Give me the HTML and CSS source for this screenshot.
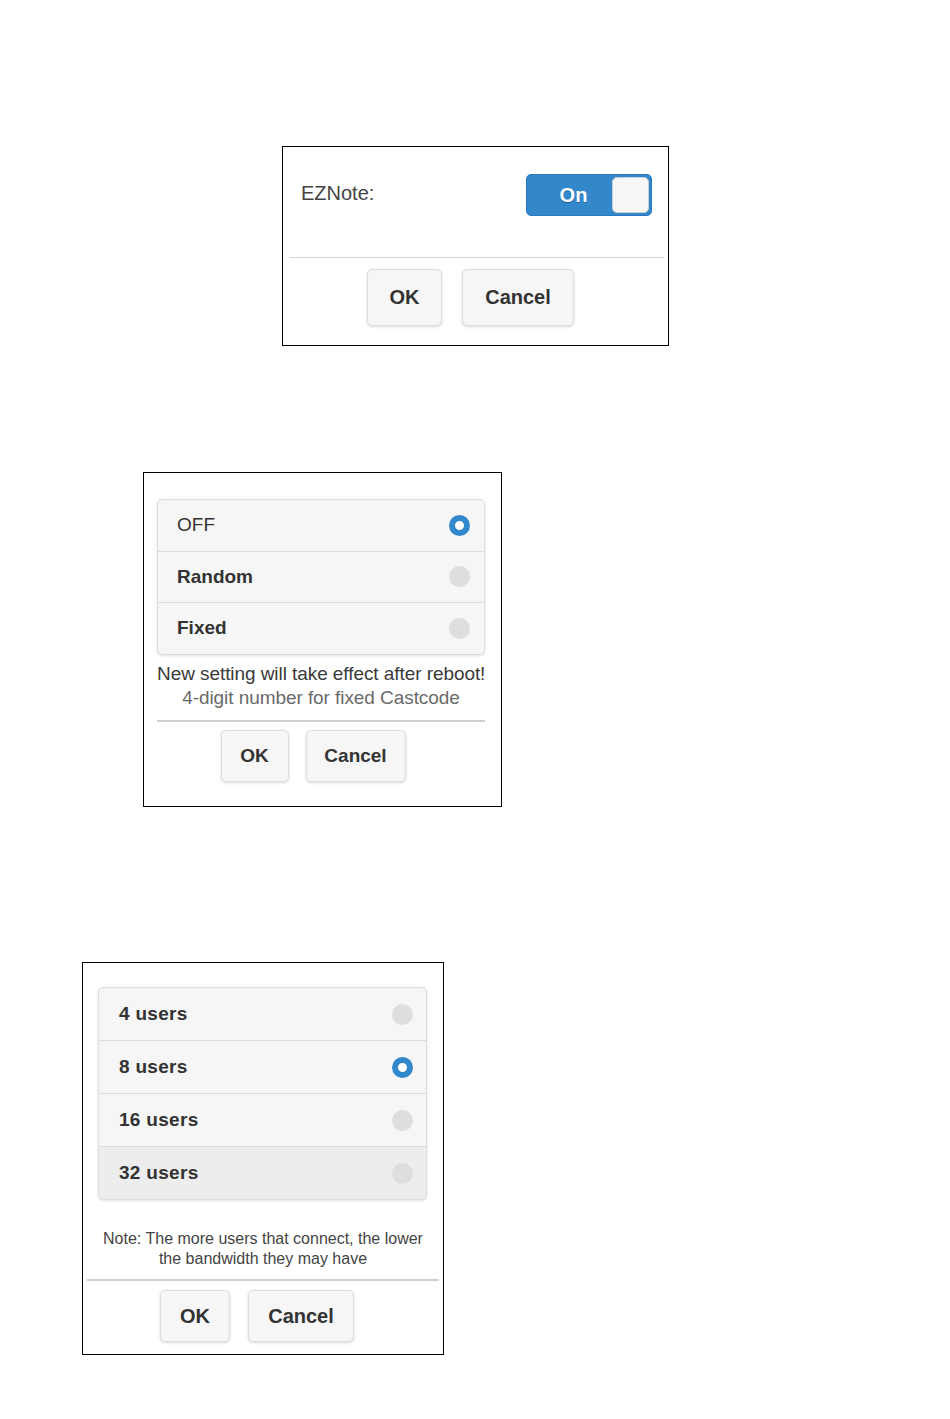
FILE: index.html
```html
<!DOCTYPE html>
<html lang="en">
<head>
    <meta charset="UTF-8">
    <title>Settings dialogs</title>
    <link rel="stylesheet" href="styles.css">
</head>
<body>
    <div class="page">
        <!-- EZNote switch -->
        <section class="dialog dialog-eznote">
            <div class="field">
                <span class="field-label">EZNote:</span>
                <div class="switch">
                    <span class="switch-text">On</span>
                    <span class="switch-knob"></span>
                </div>
            </div>
            <div class="actions">
                <button class="btn btn-ok">OK</button>
                <button class="btn btn-cancel">Cancel</button>
            </div>
        </section>

        <!-- Castcode -->
        <section class="dialog dialog-castcode">
            <ul class="choices">
                <li class="choice"><span class="choice-text plain">OFF</span><span class="radio checked"></span></li>
                <li class="choice"><span class="choice-text">Random</span><span class="radio"></span></li>
                <li class="choice"><span class="choice-text">Fixed</span><span class="radio"></span></li>
            </ul>
            <p class="hint">New setting will take effect after reboot!</p>
            <p class="hint muted">4-digit number for fixed Castcode</p>
            <div class="actions">
                <button class="btn btn-ok">OK</button>
                <button class="btn btn-cancel">Cancel</button>
            </div>
        </section>

        <!-- Max users -->
        <section class="dialog dialog-users">
            <ul class="choices">
                <li class="choice"><span class="choice-text">4 users</span><span class="radio"></span></li>
                <li class="choice"><span class="choice-text">8 users</span><span class="radio checked"></span></li>
                <li class="choice"><span class="choice-text">16 users</span><span class="radio"></span></li>
                <li class="choice hover"><span class="choice-text">32 users</span><span class="radio"></span></li>
            </ul>
            <p class="note">Note: The more users that connect, the lower<br>the bandwidth they may have</p>
            <div class="actions">
                <button class="btn btn-ok">OK</button>
                <button class="btn btn-cancel">Cancel</button>
            </div>
        </section>
    </div>
</body>
</html>
```

FILE: styles.css
```css
:root {
    --blue: #3388cc;
    --text-color: #333;
    --row-bg: #f6f6f6;
    --row-border: #dddddd;
}

* {
    margin: 0;
    padding: 0;
    box-sizing: border-box;
}

body {
    font-family: "Liberation Sans", Arial, sans-serif;
    color: var(--text-color);
    background: #fff;
}

.page {
    display: flex;
    flex-direction: column;
    align-items: flex-start;
}

.dialog {
    border: 1px solid #000;
    background: #fff;
}

/* ---------- buttons ---------- */

.actions {
    display: flex;
    justify-content: center;
}

.btn {
    font-family: inherit;
    font-weight: bold;
    color: var(--text-color);
    background: var(--row-bg);
    border: 1px solid var(--row-border);
    border-radius: 5px;
    box-shadow: 0 1px 3px rgba(0, 0, 0, 0.15);
    cursor: pointer;
}

/* ---------- EZNote ---------- */

.dialog-eznote {
    margin: 146px 0 0 282px;
    width: 387px;
    height: 200px;
    padding: 0 4px 0 6px;
}

.field {
    height: 111px;
    display: flex;
    justify-content: space-between;
    align-items: flex-start;
    padding: 27px 12px 0 12px;
    border-bottom: 1px solid #d4d4d4;
}

.field-label {
    font-size: 20px;
    color: #444;
    margin-top: 8px;
}

.switch {
    width: 126px;
    height: 42px;
    background: var(--blue);
    border: 1px solid #2a78c0;
    border-radius: 5px;
    display: flex;
    align-items: center;
    padding: 2px;
}

.switch-text {
    flex: 1;
    padding-left: 6px;
    text-align: center;
    color: #fff;
    font-size: 20px;
    font-weight: bold;
    text-shadow: 0 1px 0 #1f5e96;
}

.switch-knob {
    width: 37px;
    height: 36px;
    background: #f6f6f6;
    border: 1px solid #ccc;
    border-radius: 5px;
}

.dialog-eznote .actions {
    margin-top: 11px;
    gap: 20px;
    padding-right: 12px;
}

.dialog-eznote .btn-ok {
    width: 75px;
    height: 57px;
    font-size: 20px;
}

.dialog-eznote .btn-cancel {
    width: 112px;
    height: 57px;
    font-size: 20px;
}

/* ---------- radio lists ---------- */

.choices {
    list-style: none;
    background: var(--row-bg);
    border: 1px solid var(--row-border);
    border-radius: 5px;
    box-shadow: 0 1px 3px rgba(0, 0, 0, 0.12);
    overflow: hidden;
}

.choice {
    display: flex;
    justify-content: space-between;
    align-items: center;
    border-top: 1px solid var(--row-border);
}

.choice:first-child {
    border-top: none;
}

.choice.hover {
    background: #ededed;
}

.choice-text {
    font-weight: bold;
}

.choice-text.plain {
    font-weight: normal;
}

.radio {
    width: 21px;
    height: 21px;
    border-radius: 50%;
    background: #dedede;
}

.radio.checked {
    background: #fff;
    border: 6px solid var(--blue);
}

/* ---------- Castcode ---------- */

.dialog-castcode {
    margin: 126px 0 0 143px;
    width: 359px;
    height: 335px;
    padding: 26px 16px 0 13px;
}

.dialog-castcode .choice {
    height: 51.5px;
    padding: 0 14px 0 19px;
}

.dialog-castcode .choice:first-child {
    height: 50.5px;
}

.dialog-castcode .choice-text {
    font-size: 19px;
}

.hint {
    font-size: 19px;
    line-height: 24px;
    text-align: center;
    color: #3a3a3a;
    letter-spacing: -0.07px;
    white-space: nowrap;
}

.dialog-castcode .choices {
    margin-bottom: 7px;
}

.hint.muted {
    color: #6a6a6a;
}

.dialog-castcode .actions {
    border-top: 2px solid #cfcfcf;
    margin-top: 10px;
    padding: 8px 16px 0 0;
    gap: 17px;
}

.dialog-castcode .btn-ok {
    width: 68px;
    height: 52px;
    font-size: 19px;
}

.dialog-castcode .btn-cancel {
    width: 100px;
    height: 52px;
    font-size: 19px;
}

/* ---------- Users ---------- */

.dialog-users {
    margin: 155px 0 0 82px;
    width: 362px;
    height: 393px;
    padding: 24px 4px 0 4px;
}

.dialog-users .choices {
    margin: 0 12px 0 11px;
}

.dialog-users .choice {
    height: 53px;
    padding: 0 13px 0 20px;
}

.dialog-users .choice:first-child {
    height: 52px;
}

.dialog-users .choice-text {
    font-size: 19px;
    letter-spacing: 0.3px;
}

.note {
    margin-top: 29px;
    font-size: 16px;
    line-height: 20px;
    text-align: center;
    color: #444;
}

.dialog-users .actions {
    border-top: 2px solid #cfcfcf;
    margin-top: 10px;
    padding: 9px 12px 0 0;
    gap: 18px;
}

.dialog-users .btn-ok {
    width: 70px;
    height: 52px;
    font-size: 20px;
}

.dialog-users .btn-cancel {
    width: 106px;
    height: 52px;
    font-size: 20px;
}
```
